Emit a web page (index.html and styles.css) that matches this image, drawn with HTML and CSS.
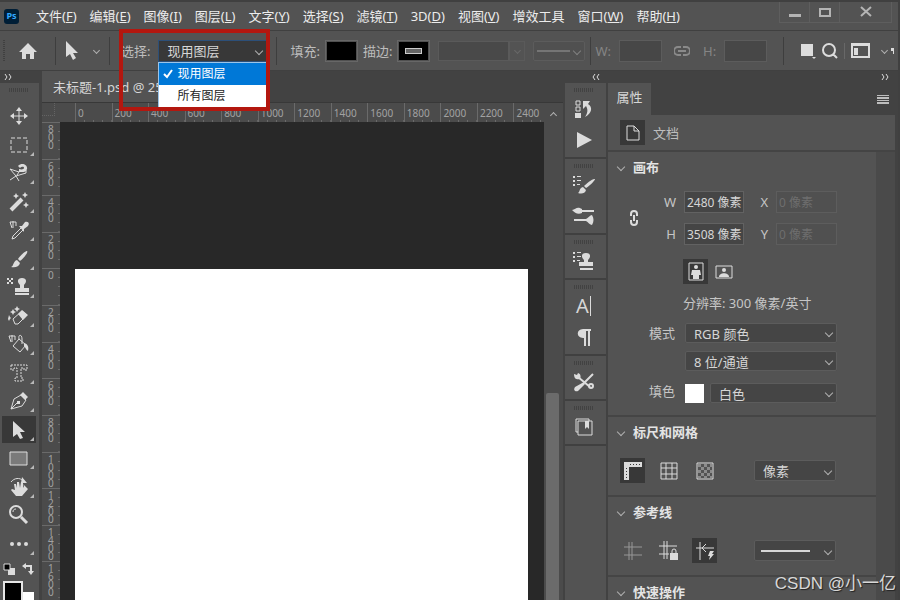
FILE: index.html
```
<!DOCTYPE html>
<html lang="zh-CN">
<head>
  <meta charset="utf-8">
  <title>未标题-1.psd</title>
  <link rel="stylesheet" href="styles.css">
</head>
<body>
<div class="app">
  <header class="menubar">
    <span class="logo">Ps</span>
    <nav class="menus">
      <a href="#">文件(<u>F</u>)</a>
      <a href="#">编辑(<u>E</u>)</a>
      <a href="#">图像(<u>I</u>)</a>
      <a href="#">图层(<u>L</u>)</a>
      <a href="#">文字(<u>Y</u>)</a>
      <a href="#">选择(<u>S</u>)</a>
      <a href="#">滤镜(<u>T</u>)</a>
      <a href="#">3D(<u>D</u>)</a>
      <a href="#">视图(<u>V</u>)</a>
      <a href="#">增效工具</a>
      <a href="#">窗口(<u>W</u>)</a>
      <a href="#">帮助(<u>H</u>)</a>
    </nav>
    <div class="window-buttons">
      <button aria-label="最小化"><svg width="12" height="12"><path d="M0 8h12v3H0z"/></svg></button>
      <button aria-label="最大化"><svg width="12" height="12"><path d="M1 3h10v7H1z" class="outline"/></svg></button>
      <button class="close" aria-label="关闭"><svg width="12" height="12"><path d="M1 1l10 9M11 1L1 10" class="outline"/></svg></button>
    </div>
  </header>

  <div class="options">
    <span class="side-grip"></span>
    <button class="home" aria-label="主页"><svg width="18" height="18"><path d="M9 1L0 10h3v7h4v-5h4v5h4v-7h3z"/></svg></button>
    <span class="divider"></span>
    <button class="current-tool" aria-label="路径选择工具">
      <svg width="12" height="19"><path d="M0 0v16l4-3 3 6 3-2-3-5h5z"/></svg>
      <span class="chevron"></span>
    </button>
    <span class="divider"></span>
    <div class="pick">
      <label for="pick-layer">选择:</label>
      <span class="select">
        <select id="pick-layer"><option>现用图层</option></select>
      </span>
      <ul class="popup">
        <li class="active"><svg width="10" height="10"><path d="M1 5l3 3 5-7" class="outline"/></svg>现用图层</li>
        <li>所有图层</li>
      </ul>
      <span class="highlight"></span>
    </div>
    <span class="divider"></span>
    <div class="paint">
      <label for="fill">填充:</label>
      <button id="fill" class="paint-box"></button>
      <label for="stroke">描边:</label>
      <button id="stroke" class="paint-box"><span class="bar"></span></button>
    </div>
    <div class="stroke-width">
      <input type="text" aria-label="描边宽度" disabled>
      <button aria-label="宽度列表" disabled><span class="chevron"></span></button>
    </div>
    <span class="select line stroke-type"><select aria-label="描边类型" disabled><option></option></select></span>
    <span class="divider"></span>
    <div class="size">
      <label for="size-w">W:</label>
      <input id="size-w" type="text" disabled>
      <svg width="16" height="10"><path d="M7 1H4a4 4 0 000 8h3M9 1h3a4 4 0 010 8H9M4 5h8" class="outline"/></svg>
      <label for="size-h">H:</label>
      <input id="size-h" type="text" disabled>
    </div>
    <span class="divider"></span>
    <div class="actions">
      <button aria-label="对齐"><svg width="15" height="17"><path d="M0 2h12v12H0zM11 15h4l-2 2z"/></svg></button>
      <button aria-label="搜索"><svg width="16" height="16"><path d="M11 11l4 4M1 7a6 6 0 1012 0A6 6 0 001 7z" class="outline"/></svg></button>
      <span class="thin"></span>
      <button aria-label="工作区"><svg width="19" height="15"><path d="M1 1h17v13H1z" class="outline"/><path d="M1 1h17v2H1zM3 5h4v7H3z"/></svg></button>
      <span class="chevron"></span>
      <svg width="3" height="8"><path d="M0 1h3v6H2V4H0z"/></svg>
    </div>
  </div>

  <main class="workspace">
    <aside class="tools">
      <div class="strip"><svg width="8" height="6"><path d="M1 0l2 3-2 3M5 0l2 3-2 3" class="outline"/></svg></div>
      <span class="grip"></span>
      <div class="tool-list">
        <button aria-label="移动"><svg width="20" height="20"><path d="M10 3v14M3 10h14" class="outline"/><path d="M10 1l3 4H7zM10 19l3-4H7zM1 10l4-3v6zM19 10l-4-3v6z"/></svg></button>
        <button class="more" aria-label="矩形选框"><svg width="20" height="20"><path d="M2 3h16v14H2z" class="outline" stroke-dasharray="4 2"/></svg></button>
        <button class="more" aria-label="套索"><svg width="20" height="20"><path d="M1 6l9 3M1 6l6 7-6 4M7 13l10-3V7M7 13l3 5M8 12l2-3" class="outline"/><path d="M9 3c4-4 10-1 9 3-1 4-5 3-8 3V6c3 1 5 0 5-1 0-2-3-1-4 0z"/></svg></button>
        <button class="more" aria-label="魔棒"><svg width="20" height="20"><path d="M2 18L13 7" class="outline thick"/><path d="M7 1l1 2 2 1-2 1-1 2-1-2-2-1 2-1zM16 0l1 2 2 1-2 1-1 2-1-2-2-1 2-1zM17 10l1 2 2 1-2 1-1 2-1-2-2-1 2-1z"/></svg></button>
        <button class="more" aria-label="吸管"><svg width="20" height="20"><path d="M12 8l-8 8-1 3 3-1 8-8M1 2l2 6M4 1v7M7 2v4M1 2h6" class="outline"/><path d="M10 6l3 0 3-4c3-1 5 1 3 4l-4 3 0 3z"/></svg></button>
        <button class="more" aria-label="画笔"><svg width="20" height="20"><path d="M18 2c2 1-5 9-7 10L9 10c2-3 7-8 9-8zM8 11l3 3c-1 4-5 5-9 4 3-1 2-6 6-7z"/></svg></button>
        <button class="more" aria-label="仿制图章"><svg width="24" height="20"><path d="M15 1c5 0 5 4 2 7v3h5v4H8v-4h5V8c-3-3-3-7 2-7zM8 16h14v2H8zM0 1h2v2H0zM4 1h2v2H4zM2 3h2v2H2zM0 5h2v2H0zM4 5h2v2H4z"/></svg></button>
        <button class="more" aria-label="橡皮擦"><svg width="22" height="20"><path d="M5 13l9-8 5 4-9 9H7z" class="outline"/><path d="M10 8l4-4 6 5-5 5zM4 5l1-2 1 2 2 1-2 1-1 2-1-2-2-1zM9 0l1 2 2 1-2 1-1 2-1-2-2-1 2-1zM1 9l1 2 1 1-1 1-1 2-1-2z"/></svg></button>
        <button class="more" aria-label="油漆桶"><svg width="22" height="20"><path d="M1 2l2 6M4 1v7M7 2v4M1 2h6M5 12l6-7 7 6-6 7zM11 5c-1-5 3-5 3 0v5" class="outline"/><path d="M16 9c4 1 5 4 4 8-2-1-2-3-4-5z"/></svg></button>
        <button class="more" aria-label="文字"><svg width="20" height="20"><path d="M2 2h16v5h-3V5h-3v10h2v3H6v-3h2V5H5v2H2z" class="outline" stroke-dasharray="2 1"/></svg></button>
        <button class="more" aria-label="钢笔"><svg width="20" height="20"><path d="M2 18l3-10 7-4 5 5-4 6zM2 18l7-7" class="outline"/><path d="M11 4l3-3 5 5-3 3zM8 10h3v3H8z"/></svg></button>
        <button class="more active" aria-label="路径选择"><svg width="20" height="20"><path d="M4 1v16l4-3 3 5 3-1-3-6h5z"/></svg></button>
        <button class="more" aria-label="矩形"><svg width="20" height="20"><path d="M1 4h17v13H1z" class="shape"/></svg></button>
        <button class="more" aria-label="旋转视图"><svg width="22" height="20"><path d="M3 5c3-4 9-5 12-1" class="outline"/><path d="M14 0l5 6-6 0zM15 7l5 5-6 7h-6l-5-6 1-1 3 1-1-6 2 0 1 4 0-6h2l1 6 1-6h2v6l1-2z"/></svg></button>
        <button aria-label="缩放"><svg width="20" height="20"><path d="M12 12l6 6" class="outline handle"/><path d="M1 7a6 6 0 1012 0A6 6 0 001 7z" class="outline ring"/><path d="M4 7c0-2 1-3 3-3" class="outline"/></svg></button>
        <button class="more" aria-label="编辑工具栏"><svg width="20" height="20"><circle cx="3" cy="10" r="2"/><circle cx="10" cy="10" r="2"/><circle cx="17" cy="10" r="2"/></svg></button>
      </div>
      <div class="swap">
        <svg width="12" height="12"><path d="M5 5h7v7H5z"/><path d="M1 1h6v6H1z" class="black-box"/></svg>
        <svg width="12" height="12"><path d="M2 3h7v6" class="outline"/><path d="M0 3l4-3v6zM9 12l-3-4h6z"/></svg>
      </div>
      <div class="colors"><button class="front" aria-label="前景色"></button><button class="back" aria-label="背景色"></button></div>
    </aside>

    <section class="document">
      <div class="tabs"><button class="tab">未标题-1.psd @ 25%</button></div>
      <div class="view">
        <span class="corner"></span>
        <div class="ruler-x">
          <span>0</span><span>200</span><span>400</span><span>600</span><span>800</span><span>1000</span><span>1200</span><span>1400</span><span>1600</span><span>1800</span><span>2000</span><span>2200</span><span>2400</span>
        </div>
        <div class="ruler-y">
          <span>800</span><span>600</span><span>400</span><span>200</span><span>0</span><span>200</span><span>400</span><span>600</span><span>800</span><span>1000</span><span>1200</span><span>1400</span><span>1600</span>
        </div>
        <div class="canvas"><div class="paper"></div></div>
        <div class="scroll"><span class="chevron up"></span><span class="thumb"></span></div>
      </div>
    </section>

    <aside class="dock">
      <div class="strip"><svg width="8" height="6"><path d="M3 0L1 3l2 3M7 0L5 3l2 3" class="outline"/></svg></div>
      <div class="group">
        <span class="grip"></span>
        <button aria-label="历史记录"><svg width="20" height="20"><path d="M2 2h4v4H2zM2 8h4v4H2z" class="outline"/><path d="M1 14h6v5H1zM9 2h7l-2 3c5 3 4 9-3 13 3-4 3-8 1-11l-3 3z"/></svg></button>
        <button aria-label="动作"><svg width="20" height="20"><path d="M3 2l15 8-15 8z"/></svg></button>
      </div>
      <div class="group">
        <span class="grip"></span>
        <button aria-label="画笔设置"><svg width="24" height="20"><path d="M1 1h2v2H1zM5 1h4v1H5zM1 5h2v2H1zM5 5h4v1H5zM1 9h2v2H1zM5 9h3v1H5zM23 4c0 2-7 8-9 9l-2-2c2-2 9-8 11-7zM11 12l3 3c-1 4-5 4-8 3 2-1 1-5 5-6z"/></svg></button>
        <button aria-label="画笔"><svg width="24" height="20"><path d="M0 4c4-1 5-4 10-1v1h12v2H10v1C6 9 3 7 0 4zM2 13h12c2-1 4-4 6-4 2 3 2 7 0 10-2 0-4-3-6-4H2z"/></svg></button>
      </div>
      <div class="group">
        <span class="grip"></span>
        <button aria-label="仿制源"><svg width="24" height="20"><path d="M1 1h2v2H1zM5 1h4v1H5zM1 5h2v2H1zM5 5h4v1H5zM1 9h2v2H1zM5 9h3v1H5zM14 2c5 0 5 4 2 7v2h5v4H7v-4h5V9C9 6 9 2 14 2zM8 17h13v2H8z"/></svg></button>
      </div>
      <div class="group">
        <span class="grip"></span>
        <button class="letter" aria-label="字符"><span>A</span></button>
        <button aria-label="段落"><svg width="20" height="20"><path d="M9 2h8v2h-1v15h-2V4h-2v15h-2v-8H9C2 11 2 2 9 2z"/></svg></button>
      </div>
      <div class="group">
        <span class="grip"></span>
        <button aria-label="工具预设"><svg width="22" height="20"><path d="M5 5l12 10M20 2l-9 9" class="outline strong"/><path d="M1 2l3 1 1-2c3 1 3 4 2 6-3 1-6 0-6-5zM11 10l1 2-7 7c-3 1-5-1-3-4z"/><circle cx="18" cy="14" r="2" class="outline strong"/></svg></button>
      </div>
      <div class="group">
        <span class="grip"></span>
        <button aria-label="库"><svg width="20" height="20"><path d="M4 4h14v14H4zM15 4V2H2v13h2" class="outline"/><path d="M11 4h4v8l-2-2-2 2z"/></svg></button>
      </div>
    </aside>

    <aside class="props">
      <div class="strip"><svg width="8" height="6"><path d="M1 0l2 3-2 3M5 0l2 3-2 3" class="outline"/></svg></div>
      <div class="props-tabs">
        <button class="tab">属性</button>
        <button class="panel-menu" aria-label="面板菜单"><svg width="12" height="9"><path d="M0 0h12v1H0zM0 2h12v2H0zM0 5h12v1H0zM0 7h12v2H0z"/></svg></button>
      </div>
      <div class="kind">
        <span class="icon-box active"><svg width="14" height="16"><path d="M1 1h7l5 5v9H1zM8 1v5h5" class="outline"/></svg></span>
        文档
      </div>
      <div class="props-body">
        <section class="section">
          <h2><span class="chevron"></span>画布</h2>
          <div class="dims">
            <svg class="link" width="10" height="16"><path d="M2 6V4a3 3 0 016 0v2M2 10v2a3 3 0 006 0v-2M5 5v6" class="outline strong"/></svg>
            <label for="cw">W</label><input id="cw" type="text" value="2480 像素">
            <label for="cx">X</label><input id="cx" type="text" value="0 像素" disabled>
            <label for="ch">H</label><input id="ch" type="text" value="3508 像素">
            <label for="cy">Y</label><input id="cy" type="text" value="0 像素" disabled>
          </div>
          <div class="orient">
            <button class="icon-box active" aria-label="纵向"><svg width="16" height="19"><path d="M1 1h14v17H1z" class="outline"/><circle cx="8" cy="5" r="2"/><path d="M4 8h8l1 5-2 0v4H5v-4H3z"/></svg></button>
            <button class="icon-box" aria-label="横向"><svg width="18" height="14"><path d="M1 1h16v12H1z" class="outline"/><circle cx="9" cy="5" r="2"/><path d="M4 12c0-5 10-5 10 0z"/></svg></button>
          </div>
          <p class="resolution">分辨率: 300 像素/英寸</p>
          <div class="fields">
            <label for="mode">模式</label>
            <span class="select"><select id="mode"><option>RGB 颜色</option></select></span>
            <span class="select second"><select aria-label="位深度"><option>8 位/通道</option></select></span>
            <label for="bg">填色</label>
            <div class="fill-row">
              <span class="white"></span>
              <span class="select"><select id="bg"><option>白色</option></select></span>
            </div>
          </div>
        </section>
        <section class="section">
          <h2><span class="chevron"></span>标尺和网格</h2>
          <div class="icon-row">
            <button class="icon-box active" aria-label="标尺"><svg width="18" height="18"><path d="M0 0h18v5H5v13H0z"/><path d="M6 2h1v1H6zM9 2h1v1H9zM12 2h1v1h-1zM15 2h1v1h-1zM2 6h1v1H2zM2 9h1v1H2zM2 12h1v1H2zM2 15h1v1H2z" class="dark"/></svg></button>
            <button class="icon-box" aria-label="网格"><svg width="18" height="18"><path d="M1 1h16v16H1zM6 1v16M12 1v16M1 6h16M1 12h16" class="outline"/></svg></button>
            <button class="icon-box" aria-label="透明网格"><svg width="18" height="18"><path d="M1 1h16v16H1z" class="outline"/><path d="M2 2h3v3H2zM8 2h3v3H8zM14 2h2v3h-2zM5 5h3v3H5zM11 5h3v3h-3zM2 8h3v3H2zM8 8h3v3H8zM14 8h2v3h-2zM5 11h3v3H5zM11 11h3v3h-3zM2 14h3v2H2zM8 14h3v2H8zM14 14h2v2h-2z" class="dim"/></svg></button>
            <span class="select"><select aria-label="单位"><option>像素</option></select></span>
          </div>
        </section>
        <section class="section">
          <h2><span class="chevron"></span>参考线</h2>
          <div class="icon-row">
            <button class="icon-box faded" aria-label="显示参考线"><svg width="18" height="18"><path d="M0 5h18M0 13h18M5 0v18M8 0v18" class="outline"/></svg></button>
            <button class="icon-box" aria-label="锁定参考线"><svg width="19" height="19"><path d="M0 5h18M0 13h10M5 0v18M8 0v18M13 12v-2a2 2 0 014 0v2" class="outline"/><path d="M11 12h8v7h-8z"/></svg></button>
            <button class="icon-box active" aria-label="智能参考线"><svg width="18" height="18"><path d="M0 6h18M4 0v18M10 2L6 6l4 4" class="outline"/><path d="M14 9h4l-2 3h2l-5 6 1-4h-2z"/></svg></button>
            <span class="select line"><select aria-label="线型"><option></option></select></span>
          </div>
        </section>
        <section class="section">
          <h2><span class="chevron"></span>快速操作</h2>
        </section>
      </div>
    </aside>
  </main>
  <span class="watermark">CSDN @小一亿</span>
</div>
</body>
</html>
```
FILE: styles.css
```
* {
  box-sizing: border-box;
}

body {
  margin: 0;
  font-family: "Noto Sans", "Noto Sans CJK SC", sans-serif;
  font-size: 13px;
  line-height: 20px;
  color: #d6d6d6;
  background: #535353;
}

button, input, select {
  margin: 0;
  padding: 0;
  border: 0;
  font: inherit;
  color: inherit;
  background: none;
}

svg {
  display: block;
  flex: none;
  fill: #dcdcdc;
}

.outline {
  fill: none;
  stroke: #dcdcdc;
  stroke-width: 2;
}

.app {
  position: relative;
  display: flex;
  flex-direction: column;
  height: 100vh;
  overflow: hidden;
  border-top: 2px solid #404040;
  border-right: 2px solid #404040;
}

/* menu bar */
.menubar {
  display: flex;
  align-items: center;
  flex: none;
  height: 29px;
  padding-left: 4px;
  border-bottom: 1px solid #404040;
}

.logo {
  width: 15px;
  height: 15px;
  border-radius: 3px;
  font-size: 9px;
  font-weight: bold;
  line-height: 14px;
  text-align: center;
  color: #31a8ff;
  background: #001e36;
}

.menus {
  display: flex;
  gap: 13px;
  margin-left: 17px;
  white-space: nowrap;
}

.menus a {
  color: #ececec;
  text-decoration: none;
}

.window-buttons {
  display: flex;
  align-self: flex-start;
  margin-left: auto;
  margin-right: 6px;
  border: 1px solid #5e5e5e;
  border-top: 0;
}

.window-buttons button {
  display: flex;
  justify-content: center;
  align-items: center;
  width: 30px;
  height: 20px;
  border-right: 1px solid #5e5e5e;
}

.window-buttons .close {
  width: 51px;
  border: 0;
}

.window-buttons svg {
  fill: #b4b4b4;
}

.window-buttons .outline {
  fill: none;
  stroke: #b4b4b4;
}

/* options bar */
.options {
  display: flex;
  align-items: center;
  flex: none;
  height: 39px;
  padding-left: 3px;
  color: #bdbdbd;
}

.side-grip {
  width: 2px;
  height: 22px;
  background: repeating-linear-gradient(#404040 0 1px, #535353 1px 2px);
}

.home {
  margin: 0 18px 0 14px;
}

.divider {
  flex: none;
  width: 1px;
  height: 28px;
  background: #3e3e3e;
}

.chevron {
  width: 5px;
  height: 5px;
  border: solid #b0b0b0;
  border-width: 0 1px 1px 0;
  transform: rotate(45deg);
}

.chevron.up {
  transform: rotate(225deg);
}

.current-tool {
  display: flex;
  align-items: center;
  gap: 16px;
  margin: 0 10px;
}

.select {
  display: grid;
  align-items: center;
}

.select select {
  grid-area: 1 / 1;
  appearance: none;
  width: 100%;
  height: 20px;
  padding-left: 8px;
  border: 1px solid #5c5c5c;
  border-radius: 2px;
  background: #454545;
  color: #d6d6d6;
  opacity: 1;
}

.select::after {
  grid-area: 1 / 1;
  justify-self: end;
  content: "";
  width: 5px;
  height: 5px;
  margin-right: 5px;
  border: solid #b0b0b0;
  border-width: 0 1px 1px 0;
  transform: rotate(45deg);
  pointer-events: none;
}

.select.line::before {
  grid-area: 1 / 1;
  z-index: 1;
  content: "";
  height: 2px;
  margin: 0 26px 0 7px;
  background: #d6d6d6;
}

.pick {
  position: relative;
  display: flex;
  align-items: center;
  gap: 8px;
  margin: 0 9px 0 11px;
}

.pick .select {
  width: 109px;
}

.pick select {
  height: 22px;
  border: 1px solid #2c4f78;
  border-radius: 0;
  background: #383838;
}

.popup {
  position: absolute;
  z-index: 3;
  top: 22px;
  right: 0;
  width: 109px;
  margin: 0;
  padding: 0;
  list-style: none;
  font-size: 12px;
  line-height: 22px;
  color: #222;
  background: #fff;
  border: 1px solid #9cc4e8;
}

.popup li {
  padding-left: 18px;
}

.popup .active {
  display: flex;
  align-items: center;
  gap: 4px;
  padding-left: 4px;
  color: #fff;
  background: #0078d7;
}

.popup .outline {
  stroke: #fff;
}

.highlight {
  position: absolute;
  z-index: 4;
  top: -11px;
  right: -3px;
  width: 151px;
  height: 82px;
  border: 4px solid #b3170f;
  pointer-events: none;
}

.paint {
  display: flex;
  align-items: center;
  gap: 5px;
  margin: 0 8px 0 13px;
}

.paint-box {
  display: flex;
  justify-content: center;
  align-items: center;
  width: 33px;
  height: 22px;
  border: 1px solid #676767;
  box-shadow: inset 0 0 0 1px #505050;
  background: #000;
}

.bar {
  width: 17px;
  height: 6px;
  border: 1px solid #ccc;
  background: #666;
}

.stroke-width {
  display: flex;
  margin-right: 8px;
}

.stroke-width input {
  width: 71px;
  height: 20px;
  border: 1px solid #5a5a5a;
  background: #494949;
}

.stroke-width button {
  display: flex;
  justify-content: center;
  align-items: center;
  width: 16px;
  border: 1px solid #5a5a5a;
}

.stroke-width .chevron {
  border-color: #686868;
}

.stroke-type {
  width: 52px;
  margin-right: 5px;
}

.stroke-type select {
  background: #505050;
}

.select.stroke-type::before {
  margin: 0 15px 0 4px;
  background: #757575;
}

.select.stroke-type::after {
  border-color: #808080;
}

.size {
  display: flex;
  align-items: center;
  gap: 8px;
  margin-left: 4px;
  color: #858585;
}

.size input {
  width: 43px;
  height: 22px;
  border: 1px solid #5c5c5c;
  background: #474747;
}

.size svg {
  margin: 0 5px 0 4px;
}

.size .outline {
  stroke: #8a8a8a;
}

.size + .divider {
  margin-left: 16px;
}

.actions {
  display: flex;
  align-items: center;
  gap: 6px;
  margin-left: auto;
  padding-right: 4px;
}

.actions .chevron {
  margin: 0 -2px 0 6px;
}

.thin {
  width: 1px;
  height: 16px;
  background: #686868;
}

/* workspace */
.workspace {
  display: grid;
  grid-template-columns: 40px 1fr 42px 288px;
  grid-template-rows: minmax(0, 1fr);
  flex: 1;
  min-height: 0;
  padding-right: 3px;
  border-top: 1px solid #404040;
  background: #424242;
}

.strip {
  display: flex;
  align-items: center;
  height: 12px;
  padding: 0 4px;
  background: #424242;
}

.strip .outline {
  stroke-width: 1;
}

.grip {
  display: block;
  width: 20px;
  height: 4px;
  background: repeating-linear-gradient(90deg, #424242 0 1px, #535353 1px 2px);
}

.tools {
  display: flex;
  flex-direction: column;
  margin-right: 1px;
  background: #535353;
}

.tools .grip {
  flex: none;
  margin: 5px 9px 10px;
}

.tools .strip {
  flex: none;
}

.tool-list {
  display: grid;
  flex: none;
  grid-template-rows: repeat(8, 28px 29px);
}

.tool-list button {
  position: relative;
  display: flex;
  justify-content: center;
  align-items: center;
  margin: 1px 3px 1px 2px;
}

.tool-list .more::after {
  position: absolute;
  right: 2px;
  bottom: 2px;
  content: "";
  border: 2px solid #b8b8b8;
  border-top-color: transparent;
  border-left-color: transparent;
}

.active {
  background: #383838;
}

.tool-list .outline {
  stroke-width: 1;
}

.tool-list .ring {
  stroke-width: 2;
}

.tool-list .handle {
  stroke-width: 3;
}

.tool-list .thick {
  stroke-width: 4;
}

.shape {
  fill: #7a7a7a;
  stroke: #dcdcdc;
}

.black-box {
  fill: #000;
  stroke: #dcdcdc;
}

.swap {
  display: flex;
  justify-content: space-between;
  flex: none;
  padding: 5px 5px 6px 3px;
}

.colors {
  display: flex;
  flex: none;
  padding-left: 3px;
}

.front {
  width: 20px;
  height: 22px;
  border: 2px solid #e6e6e6;
  background: #000;
}

.back {
  width: 11px;
  height: 14px;
  margin-top: 11px;
  background: #fff;
}

/* document */
.document {
  display: flex;
  flex-direction: column;
  min-width: 0;
  margin: 0 2px;
}

.tabs {
  display: flex;
  flex: none;
  height: 31px;
}

.tabs .tab {
  width: 226px;
  padding-left: 11px;
  text-align: left;
  background: #535353;
  white-space: nowrap;
}

.view {
  display: grid;
  grid-template-columns: 18px 1fr 19px;
  grid-template-rows: 19px minmax(0, 1fr);
  flex: 1;
  min-height: 0;
  border-top: 1px solid #383838;
  background: #4b4b4b;
  font-size: 10px;
  color: #a2a2a2;
}

.corner {
  margin: 0 5px 6px 0;
  border: dotted #646464;
  border-width: 0 1px 1px 0;
}

.ruler-x {
  display: grid;
  grid-template-columns: repeat(13, 1fr);
  overflow: hidden;
  padding-left: 15px;
  margin-right: -6px;
  clip-path: inset(0 6px 0 0);
}

.ruler-x span {
  padding-left: 2px;
  border-left: 1px solid #6a6a6a;
  background: repeating-linear-gradient(90deg, transparent 0 8px, #6a6a6a 8px 9px) bottom / 100% 3px no-repeat;
}

.ruler-y {
  display: grid;
  grid-template-rows: repeat(13, minmax(0, 1fr));
  min-height: 0;
  padding-bottom: 2px;
  line-height: 8px;
}

.ruler-y span {
  padding: 2px 4px 0 6px;
  word-break: break-all;
  border-top: 1px solid #6a6a6a;
  background: repeating-linear-gradient(transparent 0 8px, #6a6a6a 8px 9px) right / 2px 100% no-repeat;
}

.canvas {
  display: flex;
  padding: 147px 16px 0 15px;
  background: #282828;
}

.paper {
  flex: 1;
  background: #fff;
}

.scroll {
  display: flex;
  flex-direction: column;
  align-items: center;
  grid-area: 1 / 3 / 3 / 4;
  padding-top: 10px;
}

.thumb {
  flex: 1;
  width: 13px;
  margin: 275px 3px 0 0;
  border-radius: 2px 2px 0 0;
  background: #6b6b6b;
}

/* collapsed panels */
.dock {
  margin-right: 1px;
  background: #535353;
}

.dock .strip {
  justify-content: flex-end;
  margin-right: -2px;
  padding-right: 8px;
}

.group {
  display: flex;
  flex-direction: column;
  align-items: center;
  padding: 5px 4px 2px 0;
  border-bottom: 2px solid #404040;
}

.group .grip {
  margin-bottom: 1px;
}

.group button {
  display: flex;
  justify-content: center;
  align-items: center;
  height: 31px;
}

.group .outline {
  stroke-width: 1;
}

.group .strong {
  stroke-width: 2;
}

.letter {
  font-size: 20px;
}

.letter span {
  padding-right: 1px;
  border-right: 1px solid #dcdcdc;
}

/* properties */
.props {
  display: flex;
  flex-direction: column;
  min-height: 0;
  margin-left: 1px;
  background: #535353;
}

.props .strip {
  flex: none;
  justify-content: flex-end;
  padding-right: 6px;
  margin-left: -3px;
}

.props-tabs {
  display: flex;
  justify-content: space-between;
  flex: none;
  height: 32px;
  padding-right: 6px;
  background: #424242;
}

.props-tabs .tab {
  width: 43px;
  padding-bottom: 4px;
  background: #535353;
}

.panel-menu svg {
  fill: #bdbdbd;
}

.kind {
  display: flex;
  align-items: center;
  flex: none;
  gap: 8px;
  height: 37px;
  padding-left: 12px;
  border-bottom: 2px solid #444;
  color: #bdbdbd;
}

.icon-box {
  display: flex;
  justify-content: center;
  align-items: center;
  flex: none;
  width: 25px;
  height: 25px;
}

.props-body {
  flex: 1;
  min-height: 0;
  overflow: hidden;
  border-right: 19px solid #4a4a4a;
}

.props .outline {
  stroke-width: 1;
}

.props .strong {
  stroke-width: 2;
}

.section {
  padding: 4px 12px 12px;
  border-bottom: 2px solid #454545;
}

.section h2 {
  display: flex;
  align-items: center;
  gap: 9px;
  margin: 0 0 13px -2px;
  font-size: 13px;
  line-height: 22px;
  color: #e4e4e4;
}

.section h2 .chevron {
  width: 6px;
  height: 6px;
}

.section + .section h2 {
  margin-bottom: 15px;
}

.dims {
  display: grid;
  grid-template-columns: 28px 20px 60px 16px 61px;
  gap: 10px 8px;
  align-items: center;
}

.dims .link {
  grid-row: 1 / 3;
  justify-self: center;
}

.dims label {
  text-align: right;
  color: #c6c6c6;
}

.dims input {
  width: 100%;
  height: 22px;
  padding-left: 2px;
  border: 1px solid #626262;
  background: #454545;
  font-size: 12px;
}

.dims input:disabled {
  border-color: #5d5d5d;
  background: #505050;
  color: #6e6e6e;
}

.orient {
  display: flex;
  gap: 3px;
  margin: 14px 0 7px 63px;
}

.resolution {
  margin: 0 0 8px 63px;
  line-height: 24px;
  color: #c6c6c6;
}

.fields {
  display: grid;
  grid-template-columns: 24px 152px;
  gap: 8px 12px;
  align-items: center;
  margin-left: 29px;
}

.fields label {
  white-space: nowrap;
  color: #c6c6c6;
}

.fields .second {
  grid-column: 2;
}

.fill-row {
  display: flex;
  align-items: center;
  gap: 6px;
  margin-top: 4px;
}

.fill-row .select {
  flex: 1;
}

.white {
  width: 19px;
  height: 19px;
  background: #fff;
}

.icon-row {
  display: flex;
  align-items: center;
  gap: 11px;
}

.icon-row .select {
  width: 82px;
  margin-left: 26px;
}

.icon-row select {
  height: 21px;
}

.faded {
  opacity: 0.5;
}

.dark {
  fill: #383838;
}

.dim {
  fill: #8c8c8c;
}

.watermark {
  position: absolute;
  z-index: 5;
  right: 2px;
  bottom: 4px;
  font-family: "Liberation Sans", "Noto Sans CJK SC", sans-serif;
  font-size: 17px;
  line-height: 24px;
  color: #d8d8d8;
  text-shadow: 1px 1px 1px #222;
}
```
